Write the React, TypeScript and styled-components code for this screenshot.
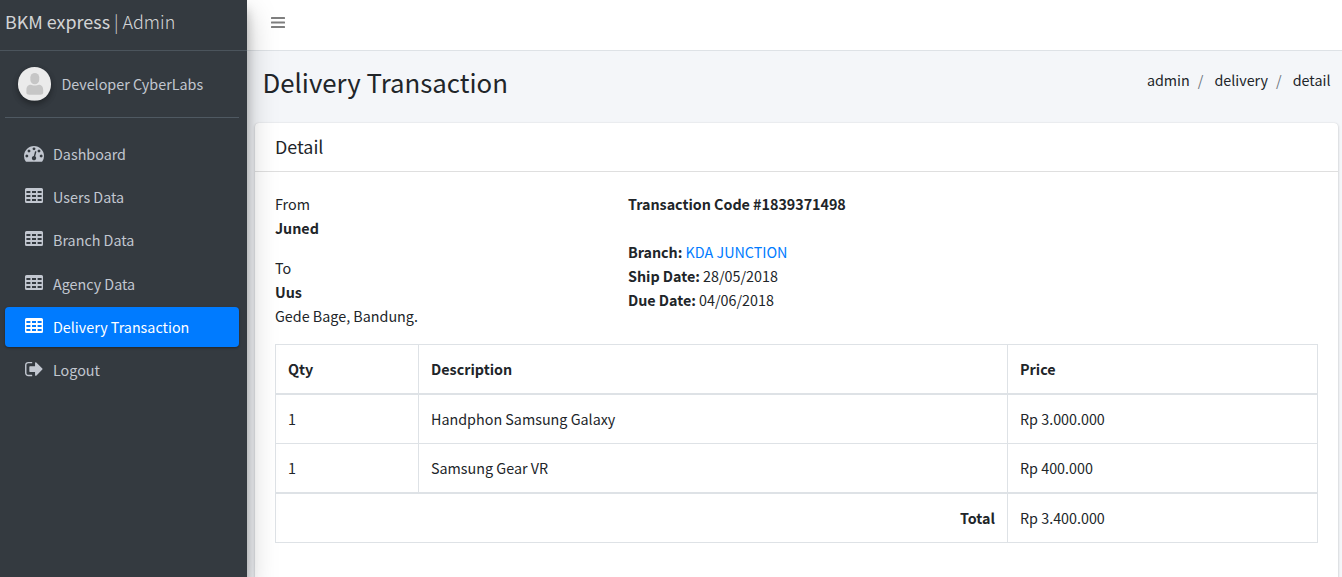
import React from "react";
import styled, { createGlobalStyle } from "styled-components";

const GlobalStyle = createGlobalStyle`
  * { box-sizing: border-box; }
  body {
    margin: 0;
    overflow: hidden;
    background: #f4f6f9;
    color: #212529;
    font-family: "Source Sans Pro", "Noto Sans CJK SC", "Noto Sans", sans-serif;
    font-size: 14.33px;
    font-weight: 400;
    line-height: 24px;
  }
  a { color: inherit; text-decoration: none; }
`;

const Shell = styled.div`
  display: flex;
  height: 577px;
  overflow: hidden;
`;

const Sidebar = styled.aside`
  position: relative;
  z-index: 1;
  flex: 0 0 247px;
  background: #343a40;
  color: #c2c7d0;
  box-shadow: 0 14px 28px rgba(0, 0, 0, 0.25), 0 10px 10px rgba(0, 0, 0, 0.22);
`;

const Brand = styled.a`
  display: block;
  height: 51px;
  padding: 6px 5px 0;
  border-bottom: 1px solid #4b545c;
  color: rgba(255, 255, 255, 0.8);
  font-size: 17.9px;
  line-height: 30px;
  white-space: nowrap;
`;

const BrandLight = styled.span`
  font-weight: 300;
`;

const UserPanel = styled.div`
  display: flex;
  align-items: center;
  height: 67px;
  margin: 0 8px 0 5px;
  padding-left: 12.8px;
  gap: 10px;
  border-bottom: 1px solid #4f5962;
`;

const Avatar = styled.svg`
  width: 33.6px;
  height: 33.6px;
  border-radius: 50%;
  box-shadow: 0 3px 6px rgba(0, 0, 0, 0.16), 0 3px 6px rgba(0, 0, 0, 0.23);
`;

const Nav = styled.nav`
  display: flex;
  flex-direction: column;
  gap: 3.2px;
  margin: 16px 8px 0 5px;
`;

const NavItem = styled.a<{ $active?: boolean }>`
  display: flex;
  align-items: center;
  height: 40px;
  padding-left: 19px;
  gap: 9px;
  border-radius: 4px;
  color: ${(p) => (p.$active ? "#fff" : "inherit")};
  background: ${(p) => (p.$active ? "#007bff" : "transparent")};
  box-shadow: ${(p) => (p.$active ? "0 1px 3px rgba(0,0,0,.12), 0 1px 2px rgba(0,0,0,.24)" : "none")};
`;

const NavIcon = styled.svg`
  width: 20px;
  height: 20px;
  margin-top: -4px;
  fill: currentColor;
`;

const Main = styled.div`
  flex: 1;
  min-width: 0;
  display: flex;
  flex-direction: column;
`;

const Topbar = styled.header`
  flex: 0 0 51px;
  padding: 17px 0 0 24px;
  background: #fff;
  border-bottom: 1px solid #dee2e6;
`;

const MenuIcon = styled.svg`
  display: block;
  width: 14px;
  height: 12px;
  fill: rgba(0, 0, 0, 0.5);
`;

const PageHeader = styled.div`
  flex: 0 0 72px;
  display: flex;
  justify-content: space-between;
  padding: 13px 11.5px 0 15.5px;
`;

const PageTitle = styled.h1`
  margin: 0;
  font-size: 25.8px;
  font-weight: 400;
  line-height: 35px;
`;

const Breadcrumb = styled.nav`
  display: flex;
  padding-top: 4px;
`;

const Slash = styled.span`
  padding: 0 11px 0 8px;
  color: #6c757d;
`;

const Card = styled.section`
  flex: 1 0 480px;
  margin: 0 4px 0 8px;
  background: #fff;
  border-radius: 4px;
  box-shadow: 0 0 1px rgba(0, 0, 0, 0.125), 0 1px 3px rgba(0, 0, 0, 0.2);
`;

const CardHeader = styled.h3`
  height: 49px;
  margin: 0;
  padding: 11px 20px;
  border-bottom: 1px solid rgba(0, 0, 0, 0.125);
  font-size: 17.9px;
  font-weight: 400;
`;

const CardBody = styled.div`
  padding: 20px;
`;

const Info = styled.div`
  display: grid;
  grid-template-columns: 353px 1fr;
`;

const Address = styled.address`
  margin-bottom: 16px;
  font-style: normal;
`;

const Strong = styled.b`
  font-weight: 700;
  letter-spacing: -0.03px;
`;

const BranchLink = styled.a`
  && { color: #007bff; }
`;

const Table = styled.table`
  width: 1043px;
  table-layout: fixed;
  border-spacing: 0;
  border-top: 1px solid #dee2e6;
  border-left: 1px solid #dee2e6;
`;

const Column = styled.col<{ $width?: number }>`
  width: ${(p) => (p.$width ? `${p.$width}px` : "auto")};
`;

const Cell = styled.td<{ $heavy?: boolean; $right?: boolean; $bold?: boolean }>`
  height: ${(p) => (p.$heavy ? 50 : 49)}px;
  padding: 12px;
  border-right: 1px solid #dee2e6;
  border-bottom: ${(p) => (p.$heavy ? 2 : 1)}px solid #dee2e6;
  text-align: ${(p) => (p.$right ? "right" : "left")};
  font-weight: ${(p) => (p.$bold ? 700 : 400)};
`;

const dashboardPath =
  "M384 1152q0-53-37.5-90.5t-90.5-37.5-90.5 37.5-37.5 90.5 37.5 90.5 90.5 37.5 90.5-37.5 37.5-90.5zm192-448q0-53-37.5-90.5t-90.5-37.5-90.5 37.5-37.5 90.5 37.5 90.5 90.5 37.5 90.5-37.5 37.5-90.5zm428 481l101-382q6-26-7.5-48.5t-38.5-29.5-48 6.5-30 39.5l-101 382q-60 5-107 43.5t-63 98.5q-20 77 20 146t117 89 146-20 89-117q16-60-6-117t-72-91zm660-33q0-53-37.5-90.5t-90.5-37.5-90.5 37.5-37.5 90.5 37.5 90.5 90.5 37.5 90.5-37.5 37.5-90.5zm-640-640q0-53-37.5-90.5t-90.5-37.5-90.5 37.5-37.5 90.5 37.5 90.5 90.5 37.5 90.5-37.5 37.5-90.5zm448 192q0-53-37.5-90.5t-90.5-37.5-90.5 37.5-37.5 90.5 37.5 90.5 90.5 37.5 90.5-37.5 37.5-90.5zm320 448q0 261-141 483-19 29-54 29h-1402q-35 0-54-29-141-221-141-483 0-182 71-348t191-286 286-191 348-71 348 71 286 191 191 286 71 348z";

const logoutPath =
  "M704 1440q0 4 1 20t.5 26.5-3 23.5-10 19.5-20.5 6.5h-320q-119 0-203.5-84.5t-84.5-203.5v-704q0-119 84.5-203.5t203.5-84.5h320q13 0 22.5 9.5t9.5 22.5q0 4 1 20t.5 26.5-3 23.5-10 19.5-20.5 6.5h-320q-66 0-113 47t-47 113v704q0 66 47 113t113 47h312l11.5 1 11.5 3 8 5.5 7 9 2 13.5zm928-544q0 26-19 45l-544 544q-19 19-45 19t-45-19-19-45v-288h-448q-26 0-45-19t-19-45v-384q0-26 19-45t45-19h448v-288q0-26 19-45t45-19 45 19l544 544q19 19 19 45z";

const DashboardIcon = () => (
  <NavIcon viewBox="0 -100 1792 1792"><path d={dashboardPath} /></NavIcon>
);
const LogoutIcon = () => (
  <NavIcon viewBox="-30 -95 1792 1792"><path d={logoutPath} /></NavIcon>
);
const TableIcon = () => (
  <NavIcon viewBox="0 0 20 20">
    <path
      fillRule="evenodd"
      d="M2.5 2.900h15q1.500 0 1.500 1.500v12q0 1.500-1.500 1.500h-15q-1.500 0-1.500-1.500v-12q0-1.500 1.500-1.500zM2.400 5.900v2.200h4v-2.200zM8 5.900v2.200h4v-2.200zM13.600 5.900v2.200h4v-2.200zM2.400 9.900v2.200h4v-2.200zM8 9.900v2.200h4v-2.200zM13.600 9.900v2.200h4v-2.200zM2.400 13.900v2.200h4v-2.200zM8 13.900v2.200h4v-2.200zM13.600 13.900v2.200h4v-2.200z"
    />
  </NavIcon>
);

const navItems = [
  { label: "Dashboard", Icon: DashboardIcon },
  { label: "Users Data", Icon: TableIcon },
  { label: "Branch Data", Icon: TableIcon },
  { label: "Agency Data", Icon: TableIcon },
  { label: "Delivery Transaction", Icon: TableIcon, active: true },
  { label: "Logout", Icon: LogoutIcon },
];

const rows = [
  { qty: "1", description: "Handphon Samsung Galaxy", price: "Rp 3.000.000" },
  { qty: "1", description: "Samsung Gear VR", price: "Rp 400.000" },
];

export default function App() {
  return (
    <>
      <GlobalStyle />
      <Shell>
        <Sidebar>
          <Brand href="#">BKM express <BrandLight>| Admin</BrandLight></Brand>
          <UserPanel>
            <Avatar viewBox="0 0 34 34">
              <rect width="34" height="34" fill="#ebebeb" />
              <rect x="12.500" y="6" width="9" height="11.500" rx="4.500" fill="#c6c6c6" />
              <path d="M8.500 26v-2.500c0-4 2-5.500 4.500-5.500 1.500 1 6.500 1 8 0 2.500 0 4.500 1.500 4.500 5.500v2.500q0 2-3 2h-11q-3 0-3-2z" fill="#c6c6c6" />
            </Avatar>
            <a href="#">Developer CyberLabs</a>
          </UserPanel>
          <Nav>
            {navItems.map(({ label, Icon, active }) => (
              <NavItem key={label} href="#" $active={active}>
                <Icon />
                <span>{label}</span>
              </NavItem>
            ))}
          </Nav>
        </Sidebar>
        <Main>
          <Topbar>
            <MenuIcon viewBox="0 0 14 12">
              <rect y="0" width="14" height="2" rx="0.500" />
              <rect y="4.500" width="14" height="2" rx="0.500" />
              <rect y="9" width="14" height="2" rx="0.500" />
            </MenuIcon>
          </Topbar>
          <PageHeader>
            <PageTitle>Delivery Transaction</PageTitle>
            <Breadcrumb>
              <a href="#">admin</a>
              <Slash>/</Slash>
              <a href="#">delivery</a>
              <Slash>/</Slash>
              <span>detail</span>
            </Breadcrumb>
          </PageHeader>
          <Card>
            <CardHeader>Detail</CardHeader>
            <CardBody>
              <Info>
                <div>
                  <Address>From<br /><Strong>Juned</Strong></Address>
                  <Address>To<br /><Strong>Uus</Strong><br />Gede Bage, Bandung.</Address>
                </div>
                <div>
                  <Strong>Transaction Code #1839371498</Strong><br /><br />
                  <Strong>Branch:</Strong> <BranchLink href="#">KDA JUNCTION</BranchLink><br />
                  <Strong>Ship Date:</Strong> 28/05/2018<br />
                  <Strong>Due Date:</Strong> 04/06/2018
                </div>
              </Info>
              <Table>
                <colgroup>
                  <Column $width={143} />
                  <Column $width={589} />
                  <Column />
                </colgroup>
                <thead>
                  <tr>
                    <Cell as="th" $heavy $bold>Qty</Cell>
                    <Cell as="th" $heavy $bold>Description</Cell>
                    <Cell as="th" $heavy $bold>Price</Cell>
                  </tr>
                </thead>
                <tbody>
                  {rows.map((r, i) => (
                    <tr key={r.description}>
                      <Cell $heavy={i === rows.length - 1}>{r.qty}</Cell>
                      <Cell $heavy={i === rows.length - 1}>{r.description}</Cell>
                      <Cell $heavy={i === rows.length - 1}>{r.price}</Cell>
                    </tr>
                  ))}
                </tbody>
                <tfoot>
                  <tr>
                    <Cell as="th" colSpan={2} $right $bold>Total</Cell>
                    <Cell>Rp 3.400.000</Cell>
                  </tr>
                </tfoot>
              </Table>
            </CardBody>
          </Card>
        </Main>
      </Shell>
    </>
  );
}
